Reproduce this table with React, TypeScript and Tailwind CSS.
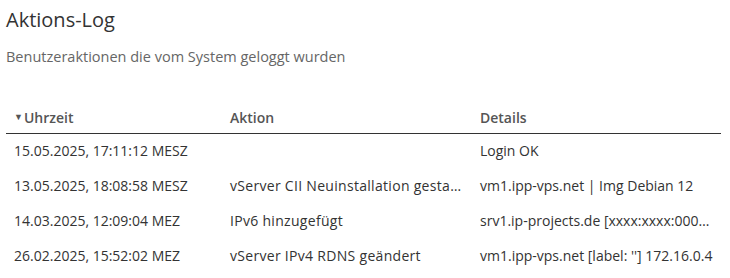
import React from "react";

const rows = [
  { t: "15.05.2025, 17:11:12 MESZ", a: "", d: "Login OK" },
  { t: "13.05.2025, 18:08:58 MESZ", a: "vServer CII Neuinstallation gestartet", d: "vm1.ipp-vps.net | Img Debian 12" },
  { t: "14.03.2025, 12:09:04 MEZ", a: "IPv6 hinzugefügt", d: "srv1.ip-projects.de [xxxx:xxxx:0000:0000::1]" },
  { t: "26.02.2025, 15:52:02 MEZ", a: "vServer IPv4 RDNS geändert", d: "vm1.ipp-vps.net [label: ''] 172.16.0.4" },
];

export default function App() {
  return (
    <div className="w-[730px] h-[278px] overflow-hidden bg-white px-[6px] pt-[6px] text-[#444]" style={{ fontFamily: '"Open Sans", sans-serif' }}>
      <h1 className="text-[20px] leading-[28px] text-[#333] font-normal">Aktions-Log</h1>
      <p className="mt-[13px] text-[14.5px] leading-[20px] text-[#666]">Benutzeraktionen die vom System geloggt wurden</p>
      <div className="mt-[33px] w-[715px]">
        <div className="grid grid-cols-[216px_250px_249px] h-[34px] pt-[1px] items-center border-b border-[#333] text-[14px] font-semibold text-[#555]">
          <div className="px-2 flex items-center gap-[1px]"><span className="text-[9px]">▼</span>Uhrzeit</div>
          <div className="px-2">Aktion</div>
          <div className="px-2">Details</div>
        </div>
        {rows.map((r, i) => (
          <div key={i} className="grid grid-cols-[216px_250px_249px] h-[35px] pb-[2px] items-center text-[14px] text-[#333]">
            <div className="px-2 truncate">{r.t}</div>
            <div className="px-2 truncate tracking-[0.3px]">{r.a}</div>
            <div className="px-2 truncate">{r.d}</div>
          </div>
        ))}
      </div>
    </div>
  );
}
